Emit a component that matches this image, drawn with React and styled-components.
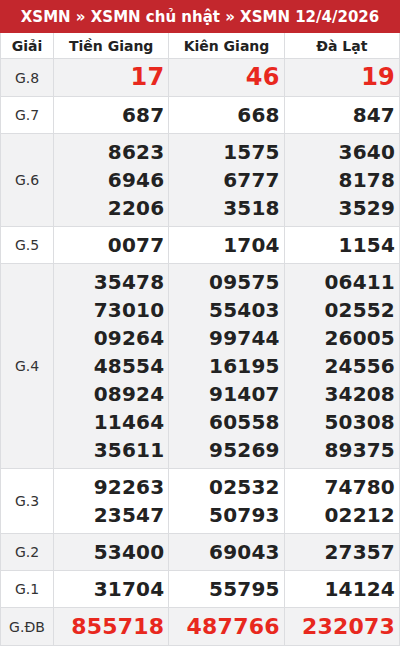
import React from 'react'
import styled, { createGlobalStyle } from 'styled-components'

const GlobalStyle = createGlobalStyle`
  body {
    margin: 0;
    background: #fff;
    font-family: "DejaVu Sans", "Liberation Sans", sans-serif;
  }
`

const Wrapper = styled.div`
  width: 400px;
`

const Title = styled.div`
  background: #c3272d;
  color: #fff;
  font-weight: 700;
  font-size: 15px;
  height: 33px;
  display: flex;
  align-items: center;
  justify-content: center;
`

const Table = styled.table`
  width: 100%;
  border-collapse: collapse;
  table-layout: fixed;
  border: 1px solid #dcdde0;
  border-top: none;
`

const HeadCell = styled.th`
  font-size: 14px;
  font-weight: 700;
  color: #222;
  height: 25px;
  padding: 0;
  border: 1px solid #dcdde0;
  border-top: none;
  text-align: center;
  width: ${({ $w }) => $w || 'auto'};
`

const Row = styled.tr`
  background: ${({ $shade }) => ($shade ? '#f2f2f3' : '#fff')};
`

const Label = styled.td`
  font-size: 14px;
  color: #333;
  text-align: center;
  border: 1px solid #dcdde0;
  padding: 0;
`

const Cell = styled.td`
  border: 1px solid #dcdde0;
  padding: 4px 4px;
  text-align: right;
  vertical-align: middle;
`

const Num = styled.div`
  font-weight: 700;
  font-size: ${({ $size }) => $size}px;
  line-height: ${({ $red }) => ($red ? 29 : 28)}px;
  color: ${({ $red }) => ($red ? '#e8281e' : '#222')};
  letter-spacing: 0.2px;
`

const provinces = ['Tiền Giang', 'Kiên Giang', 'Đà Lạt']

const prizes = [
  { name: 'G.8', red: true, size: 24, values: [['17'], ['46'], ['19']] },
  { name: 'G.7', values: [['687'], ['668'], ['847']] },
  {
    name: 'G.6',
    values: [
      ['8623', '6946', '2206'],
      ['1575', '6777', '3518'],
      ['3640', '8178', '3529'],
    ],
  },
  { name: 'G.5', values: [['0077'], ['1704'], ['1154']] },
  {
    name: 'G.4',
    values: [
      ['35478', '73010', '09264', '48554', '08924', '11464', '35611'],
      ['09575', '55403', '99744', '16195', '91407', '60558', '95269'],
      ['06411', '02552', '26005', '24556', '34208', '50308', '89375'],
    ],
  },
  {
    name: 'G.3',
    values: [
      ['92263', '23547'],
      ['02532', '50793'],
      ['74780', '02212'],
    ],
  },
  { name: 'G.2', values: [['53400'], ['69043'], ['27357']] },
  { name: 'G.1', values: [['31704'], ['55795'], ['14124']] },
  { name: 'G.ĐB', red: true, size: 22, values: [['855718'], ['487766'], ['232073']] },
]

export default function App() {
  return (
    <Wrapper>
      <GlobalStyle />
      <Title>XSMN » XSMN chủ nhật » XSMN 12/4/2026</Title>
      <Table>
        <thead>
          <tr>
            <HeadCell $w="52px">Giải</HeadCell>
            {provinces.map((p) => (
              <HeadCell key={p}>{p}</HeadCell>
            ))}
          </tr>
        </thead>
        <tbody>
          {prizes.map((prize, i) => (
            <Row key={prize.name} $shade={i % 2 === 0}>
              <Label>{prize.name}</Label>
              {prize.values.map((col, j) => (
                <Cell key={j}>
                  {col.map((v, k) => (
                    <Num key={k} $red={prize.red} $size={prize.size || 20}>
                      {v}
                    </Num>
                  ))}
                </Cell>
              ))}
            </Row>
          ))}
        </tbody>
      </Table>
    </Wrapper>
  )
}
